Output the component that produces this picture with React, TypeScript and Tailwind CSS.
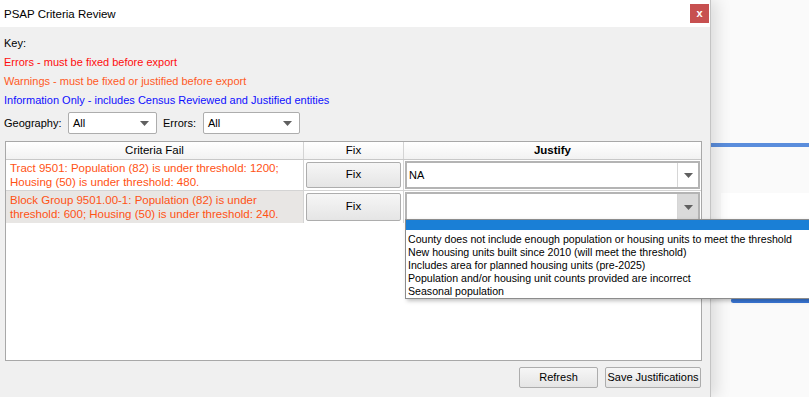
import React from 'react';

const OPTIONS = [
  'County does not include enough population or housing units to meet the threshold',
  'New housing units built since 2010 (will meet the threshold)',
  'Includes area for planned housing units (pre-2025)',
  'Population and/or housing unit counts provided are incorrect',
  'Seasonal population',
];

function Arrow() {
  return (
    <svg width="9" height="5" viewBox="0 0 9 5">
      <path d="M0 0h9L4.5 5z" fill="#606060" />
    </svg>
  );
}

function Combo({ value, width }: { value: string; width: string }) {
  return (
    <div className={`${width} h-[22px] flex items-center justify-between bg-white border border-[#adadad] rounded-[2px] pl-[4px] pr-[7px]`}>
      <span className="text-[11px] text-black">{value}</span>
      <Arrow />
    </div>
  );
}

function FixButton() {
  return (
    <div className="mx-[2px] my-[2px] flex-1 flex items-center justify-center bg-gradient-to-b from-[#f6f6f6] to-[#e5e5e5] border border-[#adadad] rounded-[2px] text-[11.5px] text-black">
      Fix
    </div>
  );
}

function JustifyCombo({ value, open }: { value: string; open?: boolean }) {
  return (
    <div className="relative m-[1px] flex-1 flex bg-white border-2 border-[#b4b4b4]">
      <div className="flex-1 flex items-center pl-[2px] text-[11px] text-black">{value}</div>
      <div
        className={`w-[21px] flex items-center justify-center border-l border-[#d6d6d6] ${open ? 'bg-[#dadada]' : 'bg-white'}`}
      >
        <Arrow />
      </div>
      {/* open dropdown list */}
      {open && (
        <div className="absolute left-[-2px] top-[25px] w-[406px] z-30 bg-white border border-[#8c8c8c] shadow-[2px_2px_4px_rgba(0,0,0,0.25)]">
          <div className="h-[10px] bg-[#1a7fd6]" />
          <div className="pt-[3px]">
            {OPTIONS.map((o) => (
              <div key={o} className="h-[13px] leading-[13px] pl-[2px] text-[10.6px] text-black whitespace-nowrap">
                {o}
              </div>
            ))}
          </div>
        </div>
      )}
    </div>
  );
}

export default function App() {
  return (
    <div className="w-[809px] h-[397px] flex bg-[#fafafa] overflow-hidden font-['Liberation_Sans',Arial,sans-serif]">
      {/* Dialog */}
      <div className="relative z-10 w-[711px] shrink-0 h-full flex flex-col bg-[#f0f0f0] border-r border-[#c4c4c4] shadow-[6px_0_14px_rgba(0,0,0,0.12)]">
        {/* Title bar */}
        <div className="h-[27px] bg-white flex items-start justify-between pl-[4px] pr-[1px]">
          <span className="mt-[6px] text-[11.5px] text-black">PSAP Criteria Review</span>
          <div className="mt-[4px] w-[19px] h-[19px] bg-[#c75050] flex items-center justify-center text-white text-[11px] font-bold leading-none">
            x
          </div>
        </div>

        <div className="flex-1 flex flex-col pl-[4px] pr-[8px] pt-[7px]">
          <div className="flex flex-col text-[11px] leading-[19px]">
            <span className="text-black">Key:</span>
            <span className="text-[#ff0d0d]">Errors - must be fixed before export</span>
            <span className="text-[#ff5a1f]">Warnings - must be fixed or justified before export</span>
            <span className="text-[#0f0fff]">Information Only - includes Census Reviewed and Justified entities</span>
          </div>

          {/* Filters */}
          <div className="mt-[2px] flex items-center text-[11px] text-black">
            <span className="w-[64px]">Geography:</span>
            <Combo value="All" width="w-[89px]" />
            <span className="ml-[6px] w-[40px]">Errors:</span>
            <Combo value="All" width="w-[97px]" />
          </div>

          {/* Table */}
          <div className="mt-[7px] ml-[1px] w-[697px] h-[220px] bg-white border border-[#a8a8a8] flex flex-col">
            <div className="h-[18px] grid grid-cols-[298px_100px_1fr] bg-gradient-to-b from-white to-[#f2f2f2] border-b border-[#c8c8c8] text-[11.5px] text-black">
              <div className="flex items-center justify-center border-r border-[#d4d4d4]">Criteria Fail</div>
              <div className="flex items-center justify-center border-r border-[#d4d4d4]">Fix</div>
              <div className="flex items-center justify-center font-bold">Justify</div>
            </div>

            <div className="h-[31px] grid grid-cols-[298px_100px_1fr] border-b border-[#d4d4d4]">
              <div className="flex items-center pl-[4px] pr-[4px] text-[11.5px] leading-[14px] text-[#ff5214] border-r border-[#d4d4d4]">
                Tract 9501: Population (82) is under threshold: 1200; Housing (50) is under threshold: 480.
              </div>
              <div className="flex border-r border-[#d4d4d4]">
                <FixButton />
              </div>
              <div className="flex">
                <JustifyCombo value="NA" />
              </div>
            </div>

            <div className="h-[32px] grid grid-cols-[298px_100px_1fr]">
              <div className="flex items-center pl-[4px] pr-[4px] text-[11.5px] leading-[14px] text-[#ff5214] bg-[#e8e6e4] border-r border-[#d4d4d4]">
                Block Group 9501.00-1: Population (82) is under threshold: 600; Housing (50) is under threshold: 240.
              </div>
              <div className="flex border-r border-[#d4d4d4]">
                <FixButton />
              </div>
              <div className="flex">
                <JustifyCombo value="" open />
              </div>
            </div>
          </div>

          {/* Footer */}
          <div className="mt-[6px] flex justify-end gap-[7px] pr-[1px]">
            <div className="w-[79px] h-[21px] flex items-center justify-center bg-gradient-to-b from-[#f6f6f6] to-[#e5e5e5] border border-[#adadad] rounded-[2px] text-[11px] text-black">
              Refresh
            </div>
            <div className="w-[96px] h-[21px] flex items-center justify-center whitespace-nowrap bg-gradient-to-b from-[#f6f6f6] to-[#e5e5e5] border border-[#adadad] rounded-[2px] text-[11px] text-black">
              Save Justifications
            </div>
          </div>
        </div>
      </div>

      {/* Desktop behind */}
      <div className="flex-1 flex flex-col pt-[143px]">
        <div className="h-[4px] bg-[#5a8ddc]" />
        <div className="ml-[10px] mt-[46px] h-[29px] bg-white" />
        <div className="ml-[20px] mt-[76px] h-[5px] rounded-l-[4px] bg-[#3a78d8]" />
      </div>
    </div>
  );
}
